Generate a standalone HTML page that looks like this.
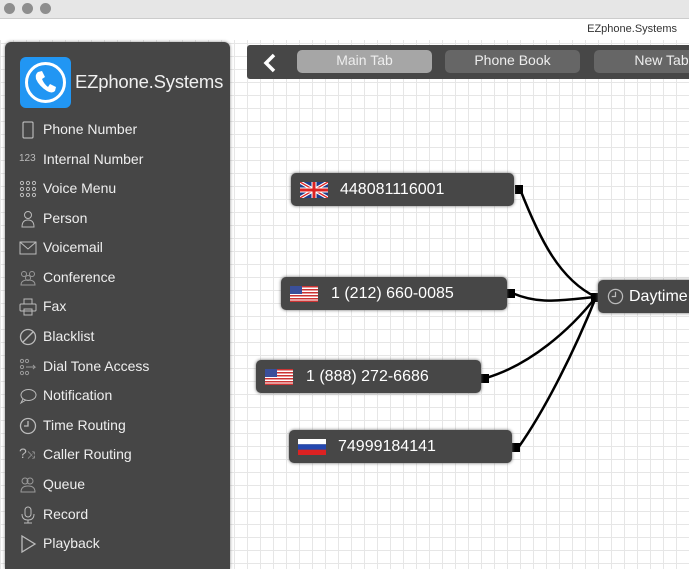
<!DOCTYPE html>
<html><head><style>
html,body{margin:0;width:689px;height:569px;overflow:hidden}
body{position:relative;font-family:"Liberation Sans",sans-serif;background:#fff}
.tb{position:absolute;left:0;top:0;width:689px;height:18px;background:#e6e6e6;border-bottom:1px solid #ccc}
.dot{position:absolute;top:3px;width:11px;height:11px;border-radius:50%;background:#8e8e8e}
.hdr{position:absolute;top:19px;left:0;width:689px;height:21px;background:#fff;font-size:11px;color:#333}
.canvas{position:absolute;top:40px;left:0;width:689px;height:529px;background-color:#fff;background-image:linear-gradient(#e6e6e6 1px,transparent 1px),linear-gradient(90deg,#e6e6e6 1px,transparent 1px);background-size:13px 13px;background-position:0 3px}
.side{position:absolute;left:5px;top:42px;width:225px;height:527px;background:#464646;border-radius:6px 6px 0 0;box-shadow:0 0 3px #888}
.logo{position:absolute;left:15px;top:15px;width:51px;height:51px;background:#2196f3;border-radius:6px}
.brand{position:absolute;left:70px;top:29px;color:#f0f0f0;font-size:18.5px;letter-spacing:-0.2px}
.item{position:absolute;left:38px;color:#eee;font-size:14px}
.ic{position:absolute;left:-24px;top:0;width:18px;height:18px}
.bar{position:absolute;left:247px;top:45px;width:450px;height:34px;background:#474747;border-radius:3px}
.tab{position:absolute;top:5px;height:23px;border-radius:5px;color:#eee;font-size:14px;text-align:center;line-height:21px}
.node{position:absolute;height:33px;background:#474747;border-radius:5px;color:#fff;font-size:16px;line-height:33px;box-shadow:0 0 3px #666}
.flag{position:absolute;top:9px;width:28px;height:16px}
.sq{position:absolute;width:8px;height:9px;background:#000}
</style></head><body>
<div class="tb"><div class="dot" style="left:4px"></div><div class="dot" style="left:22px"></div><div class="dot" style="left:40px"></div></div>
<div class="hdr"><span style="position:absolute;right:12px;top:4px">EZphone.Systems</span></div>
<div class="canvas"></div>
<svg style="position:absolute;left:0;top:0" width="689" height="569">
<g fill="none" stroke="#000" stroke-width="2.5">
<path d="M520 189 C540 240 560 280 596 297"/>
<path d="M512 293 C540 305 560 300 596 297"/>
<path d="M486 378 C530 365 570 330 596 297"/>
<path d="M518 448 C545 410 575 350 596 297"/>
</g></svg>
<div class="sq" style="left:515px;top:185px"></div>
<div class="sq" style="left:507px;top:289px"></div>
<div class="sq" style="left:481px;top:374px"></div>
<div class="sq" style="left:512px;top:443px"></div>
<div class="sq" style="left:591px;top:293px"></div>
<div class="side">
<div class="logo"><svg width="51" height="51"><circle cx="25.5" cy="25.5" r="19" fill="none" stroke="#fff" stroke-width="3"/><path d="M18 15 l4 -1 l3 6 l-3 2 q2 5 6 8 l2 -3 l6 3 l-1 4 q-3 3 -8 0 q-8 -5 -11 -12 q-1 -5 2 -7z" fill="#fff"/></svg></div>
<div class="brand">EZphone.Systems</div>
<div class="item" style="top:79px"><svg class="ic" viewBox="0 0 18 18"><rect x="4" y="1" width="10" height="16" rx="1" fill="none" stroke="#ccc"/></svg>Phone Number</div>
<div class="item" style="top:109px"><span style="position:absolute;left:-24px;top:2px;font-size:10px;color:#bbb">123</span>Internal Number</div>
<div class="item" style="top:138px"><svg class="ic" viewBox="0 0 18 18" fill="none" stroke="#bbb"><circle cx="3" cy="3" r="1.6"/><circle cx="9" cy="3" r="1.6"/><circle cx="15" cy="3" r="1.6"/><circle cx="3" cy="9" r="1.6"/><circle cx="9" cy="9" r="1.6"/><circle cx="15" cy="9" r="1.6"/><circle cx="3" cy="15" r="1.6"/><circle cx="9" cy="15" r="1.6"/><circle cx="15" cy="15" r="1.6"/></svg>Voice Menu</div>
<div class="item" style="top:168px"><svg class="ic" viewBox="0 0 18 18" fill="none" stroke="#bbb"><circle cx="9" cy="5" r="3.5"/><path d="M3 17 q0 -7 6 -7 q6 0 6 7z"/></svg>Person</div>
<div class="item" style="top:197px"><svg class="ic" viewBox="0 0 18 18" fill="none" stroke="#bbb"><rect x="1" y="3" width="16" height="12"/><path d="M1 3 l8 7 l8 -7"/></svg>Voicemail</div>
<div class="item" style="top:227px"><svg class="ic" viewBox="0 0 18 18" fill="none" stroke="#999"><circle cx="5" cy="5" r="2.5"/><circle cx="13" cy="5" r="2.5"/><circle cx="9" cy="9" r="2.5"/><path d="M2 16 q0-5 7-5 q7 0 7 5z"/></svg>Conference</div>
<div class="item" style="top:256px"><svg class="ic" viewBox="0 0 18 18" fill="none" stroke="#bbb"><rect x="5" y="1" width="8" height="5"/><rect x="1" y="6" width="16" height="7" rx="1"/><rect x="5" y="11" width="8" height="6"/></svg>Fax</div>
<div class="item" style="top:286px"><svg class="ic" viewBox="0 0 18 18" fill="none" stroke="#bbb" stroke-width="1.3"><circle cx="9" cy="9" r="7.5"/><path d="M4 14 L14 4"/></svg>Blacklist</div>
<div class="item" style="top:316px"><svg class="ic" viewBox="0 0 18 18" fill="none" stroke="#999"><circle cx="3" cy="3" r="1.6"/><circle cx="8" cy="3" r="1.6"/><circle cx="3" cy="9" r="1.6"/><circle cx="3" cy="15" r="1.6"/><circle cx="8" cy="15" r="1.6"/><path d="M7 9 h9 l-2 -2 m2 2 l-2 2"/></svg>Dial Tone Access</div>
<div class="item" style="top:345px"><svg class="ic" viewBox="0 0 18 18" fill="none" stroke="#bbb"><ellipse cx="9.5" cy="8" rx="7.5" ry="5.5"/><path d="M4 12 l-2 4 l5 -3"/></svg>Notification</div>
<div class="item" style="top:375px"><svg class="ic" viewBox="0 0 18 18" fill="none" stroke="#bbb" stroke-width="1.3"><circle cx="9" cy="9" r="7.5"/><path d="M9 4 v5 h-4"/></svg>Time Routing</div>
<div class="item" style="top:404px"><span style="position:absolute;left:-24px;top:-1px;font-size:14px;color:#bbb">?<span style="font-size:10px">⤨</span></span>Caller Routing</div>
<div class="item" style="top:434px"><svg class="ic" viewBox="0 0 18 18" fill="none" stroke="#999"><circle cx="6" cy="5" r="3"/><circle cx="11" cy="5" r="3"/><path d="M2 16 q0-6 7-6 q7 0 7 6z"/></svg>Queue</div>
<div class="item" style="top:464px"><svg class="ic" viewBox="0 0 18 18" fill="none" stroke="#bbb"><rect x="6" y="1" width="6" height="10" rx="3"/><path d="M3 8 q0 6 6 6 q6 0 6 -6 M9 14 v3 M5 17 h8"/></svg>Record</div>
<div class="item" style="top:493px"><svg class="ic" viewBox="0 0 18 18" fill="none" stroke="#bbb" stroke-width="1.3"><path d="M3 1 L16 9 L3 17z"/></svg>Playback</div>
</div>
<div class="bar">
<svg style="position:absolute;left:16px;top:8px" width="14" height="20"><path d="M11 2 L3 10 L11 18" fill="none" stroke="#fff" stroke-width="3.5"/></svg>
<div class="tab" style="left:50px;width:135px;background:#a6a6a6">Main Tab</div>
<div class="tab" style="left:198px;width:135px;background:#666">Phone Book</div>
<div class="tab" style="left:347px;width:135px;background:#666">New Tab</div>
</div>
<div class="node" style="left:291px;top:173px;width:223px"><svg class="flag" style="left:9px" viewBox="0 0 28 16"><rect width="28" height="16" fill="#1f3d8a"/><path d="M0 0 L28 16 M28 0 L0 16" stroke="#fff" stroke-width="3.5"/><path d="M0 0 L28 16 M28 0 L0 16" stroke="#d22" stroke-width="1.3"/><path d="M14 0 v16 M0 8 h28" stroke="#fff" stroke-width="5"/><path d="M14 0 v16 M0 8 h28" stroke="#d22" stroke-width="3"/></svg><span style="position:absolute;left:49px">448081116001</span></div>
<div class="node" style="left:281px;top:277px;width:226px"><svg class="flag" style="left:9px" viewBox="0 0 28 16"><rect width="28" height="16" fill="#fff"/><g fill="#c33"><rect y="0" width="28" height="1.5"/><rect y="3" width="28" height="1.5"/><rect y="6" width="28" height="1.5"/><rect y="9" width="28" height="1.5"/><rect y="12" width="28" height="1.5"/><rect y="14.5" width="28" height="1.5"/></g><rect width="12" height="8" fill="#3a4f9a"/></svg><span style="position:absolute;left:50px">1 (212) 660-0085</span></div>
<div class="node" style="left:256px;top:360px;width:225px"><svg class="flag" style="left:9px" viewBox="0 0 28 16"><rect width="28" height="16" fill="#fff"/><g fill="#c33"><rect y="0" width="28" height="1.5"/><rect y="3" width="28" height="1.5"/><rect y="6" width="28" height="1.5"/><rect y="9" width="28" height="1.5"/><rect y="12" width="28" height="1.5"/><rect y="14.5" width="28" height="1.5"/></g><rect width="12" height="8" fill="#3a4f9a"/></svg><span style="position:absolute;left:50px">1 (888) 272-6686</span></div>
<div class="node" style="left:289px;top:430px;width:223px"><svg class="flag" style="left:9px" viewBox="0 0 28 16"><rect width="28" height="5.3" fill="#fff"/><rect y="5.3" width="28" height="5.4" fill="#2448b0"/><rect y="10.7" width="28" height="5.3" fill="#d22"/></svg><span style="position:absolute;left:49px">74999184141</span></div>
<div class="node" style="left:598px;top:280px;width:110px"><svg style="position:absolute;left:9px;top:8px" width="17" height="17" viewBox="0 0 18 18" fill="none" stroke="#bbb" stroke-width="1.3"><circle cx="9" cy="9" r="7.5"/><path d="M9 4 v5 h-4"/></svg><span style="position:absolute;left:31px">Daytime</span></div>
</body></html>
